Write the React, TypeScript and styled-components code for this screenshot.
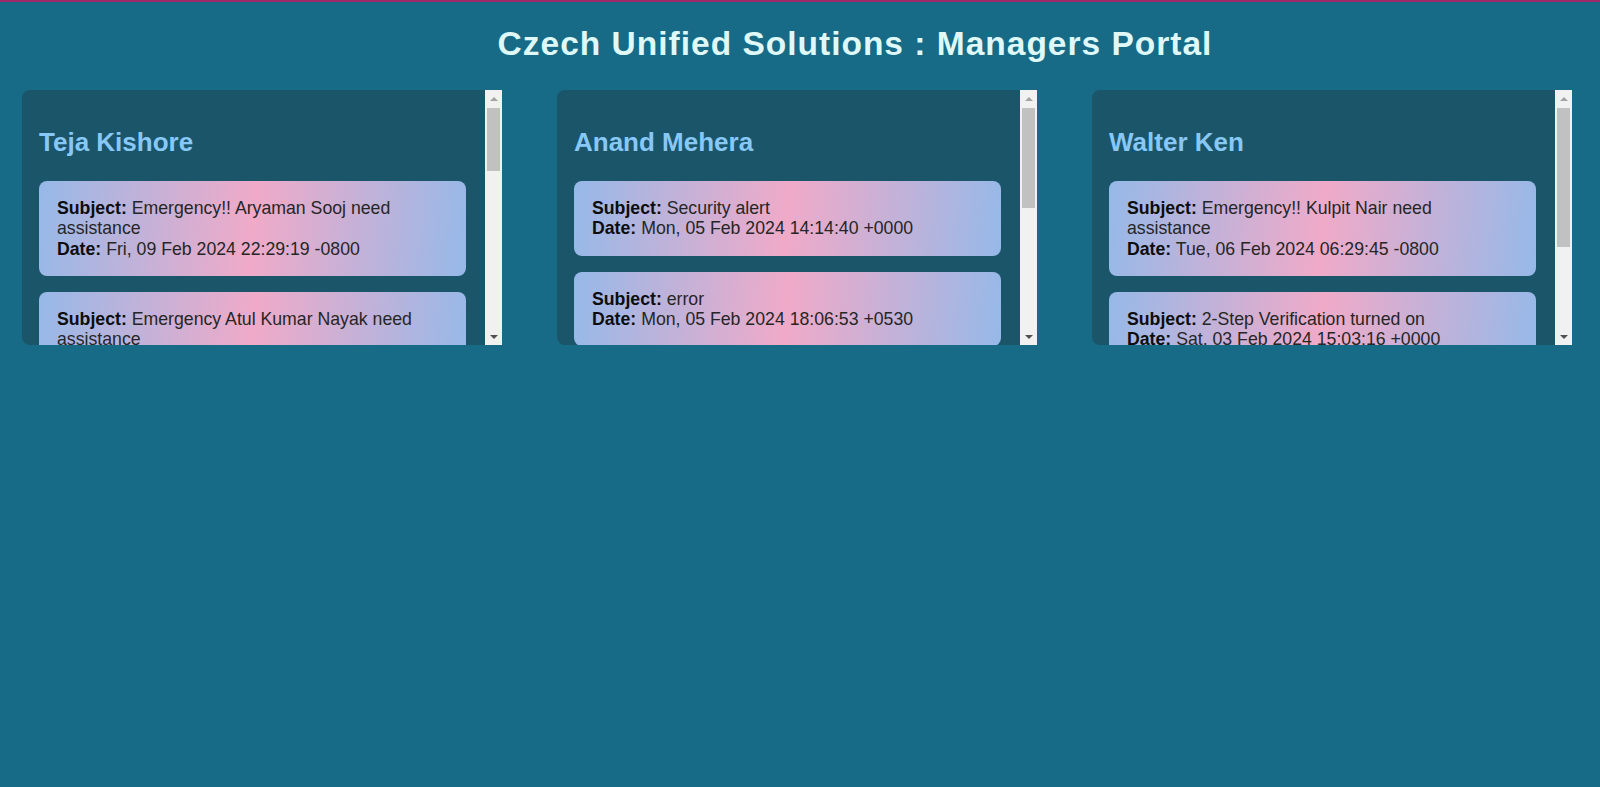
import React, { useLayoutEffect, useRef, useState } from "react";
import styled, { createGlobalStyle } from "styled-components";

const GlobalStyle = createGlobalStyle`
  html, body {
    margin: 0;
    padding: 0;
    background: #176b87;
  }
  body {
    font-family: "Liberation Sans", Arial, sans-serif;
  }
`;

const TopBar = styled.div`
  height: 2px;
  background: #9e2b68;
`;

const Page = styled.div`
  min-height: 785px;
  background: #176b87;
`;

const Title = styled.h1`
  margin: 0;
  padding: 23px 0 0 110px;
  font-size: 33.5px;
  line-height: 37px;
  letter-spacing: 1px;
  font-weight: 700;
  text-align: center;
  color: #dff9f9;
`;

const Board = styled.div`
  display: flex;
  gap: 55px;
  padding: 28px 22px 0;
`;

const Panel = styled.section`
  display: flex;
  width: 480px;
  height: 255px;
  flex: none;
  overflow: hidden;
  background: #1b5569;
  border-radius: 8px 0 0 8px;
`;

const Scroller = styled.div`
  box-sizing: border-box;
  flex: 1;
  min-width: 0;
  height: 100%;
  overflow: hidden;
  padding: 37px 19px 16px 17px;
`;

const ScrollBar = styled.div`
  flex: none;
  width: 17px;
  display: flex;
  flex-direction: column;
  background: #f1f1f1;
`;

const ArrowButton = styled.div<{ $dir: "up" | "down"; $color: string }>`
  flex: none;
  height: 17px;
  display: flex;
  align-items: center;
  justify-content: center;

  &::before {
    content: "";
    width: 0;
    height: 0;
    border-left: 4px solid transparent;
    border-right: 4px solid transparent;
    ${(p) =>
      p.$dir === "up"
        ? `border-bottom: 4px solid ${p.$color};`
        : `border-top: 4px solid ${p.$color};`}
  }
`;

const Track = styled.div`
  flex: 1;
  padding: 1px 2px 0;
`;

const Thumb = styled.div`
  background: #c1c1c1;
`;

const ManagerName = styled.h2`
  margin: 0 0 24px;
  font-size: 26px;
  line-height: 30px;
  font-weight: 700;
  color: #87c8f7;
`;

const MailList = styled.div`
  display: flex;
  flex-direction: column;
  gap: 16px;
`;

const MailCard = styled.div`
  border-radius: 8px;
  padding: 17px 18px 17px;
  background: linear-gradient(95deg, #96b9e8 0%, #f0aac8 50%, #96b9e8 100%);
  font-size: 17.7px;
  line-height: 1.15;
  color: #262626;
`;

const Label = styled.strong`
  font-weight: 700;
  color: #0d0d0d;
`;

type Mail = { subject: string; date: string };
type Manager = { name: string; mails: Mail[] };

const managers: Manager[] = [
  {
    name: "Teja Kishore",
    mails: [
      { subject: "Emergency!! Aryaman Sooj need assistance", date: "Fri, 09 Feb 2024 22:29:19 -0800" },
      { subject: "Emergency Atul Kumar Nayak need assistance", date: "Thu, 08 Feb 2024 11:42:07 -0800" },
      { subject: "Security alert", date: "Wed, 07 Feb 2024 09:15:33 +0000" },
      { subject: "Emergency!! Ravi Shankar Pillai need assistance", date: "Tue, 06 Feb 2024 17:08:51 -0800" },
      { subject: "Weekly status report", date: "Mon, 05 Feb 2024 10:02:14 +0530" },
      { subject: "Emergency Meera Joshi Kulkarni need assistance", date: "Sun, 04 Feb 2024 20:47:26 -0800" },
      { subject: "2-Step Verification turned on", date: "Sat, 03 Feb 2024 15:03:16 +0000" },
      { subject: "Welcome aboard", date: "Fri, 02 Feb 2024 08:30:00 +0530" },
    ],
  },
  {
    name: "Anand Mehera",
    mails: [
      { subject: "Security alert", date: "Mon, 05 Feb 2024 14:14:40 +0000" },
      { subject: "error", date: "Mon, 05 Feb 2024 18:06:53 +0530" },
      { subject: "Emergency!! Sanjay Kumar Reddy need assistance", date: "Sun, 04 Feb 2024 12:51:09 -0800" },
      { subject: "Meeting reminder", date: "Sat, 03 Feb 2024 09:20:44 +0530" },
      { subject: "2-Step Verification turned on", date: "Fri, 02 Feb 2024 16:38:02 +0000" },
    ],
  },
  {
    name: "Walter Ken",
    mails: [
      { subject: "Emergency!! Kulpit Nair need assistance", date: "Tue, 06 Feb 2024 06:29:45 -0800" },
      { subject: "2-Step Verification turned on", date: "Sat, 03 Feb 2024 15:03:16 +0000" },
      {
        subject: "Emergency!! Venkata Subramanian Iyer and Priya Raghavan need immediate assistance",
        date: "Fri, 02 Feb 2024 21:11:37 -0800",
      },
    ],
  },
];

const TRACK_LENGTH = 255 - 34;

function ManagerPanel({ manager }: { manager: Manager }) {
  const scrollRef = useRef<HTMLDivElement>(null);
  const [thumb, setThumb] = useState(60);

  useLayoutEffect(() => {
    const el = scrollRef.current;
    if (!el) return;
    const ratio = el.clientHeight / Math.max(el.scrollHeight, 1);
    setThumb(Math.round(TRACK_LENGTH * Math.min(ratio, 1)));
  }, []);

  return (
    <Panel>
      <Scroller ref={scrollRef}>
        <ManagerName>{manager.name}</ManagerName>
        <MailList>
          {manager.mails.map((mail, i) => (
            <MailCard key={i}>
              <Label>Subject:</Label> {mail.subject}
              <br />
              <Label>Date:</Label> {mail.date}
            </MailCard>
          ))}
        </MailList>
      </Scroller>
      <ScrollBar>
        <ArrowButton $dir="up" $color="#a3a3a3" />
        <Track>
          <Thumb style={{ height: thumb }} />
        </Track>
        <ArrowButton $dir="down" $color="#505050" />
      </ScrollBar>
    </Panel>
  );
}

export default function App() {
  return (
    <Page>
      <GlobalStyle />
      <TopBar />
      <Title>Czech Unified Solutions : Managers Portal</Title>
      <Board>
        {managers.map((m) => (
          <ManagerPanel key={m.name} manager={m} />
        ))}
      </Board>
    </Page>
  );
}
